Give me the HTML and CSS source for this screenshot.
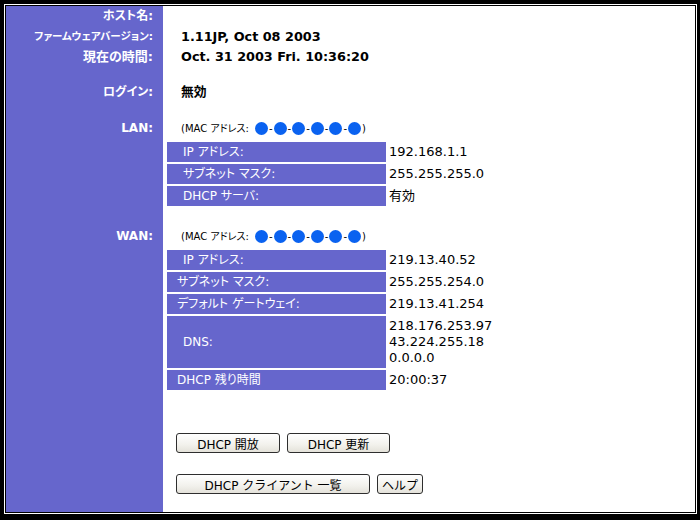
FILE: index.html
```html
<!DOCTYPE html>
<html>
  <head>
    <meta charset="utf-8">
    <title>ステータス</title>
    <link rel="stylesheet" href="styles.css">
  </head>
  <body>
    <div class="frame">
      <div class="page">

        <div class="row host">
          <div class="label">ホスト名:</div>
          <div class="value"></div>
        </div>
        <div class="row firmware">
          <div class="label small">ファームウェアバージョン:</div>
          <div class="value">1.11JP, Oct 08 2003</div>
        </div>
        <div class="row clock">
          <div class="label big">現在の時間:</div>
          <div class="value">Oct. 31 2003 Fri. 10:36:20</div>
        </div>
        <div class="row login">
          <div class="label">ログイン:</div>
          <div class="value">無効</div>
        </div>

        <div class="row lan">
          <div class="label latin">LAN:</div>
          <div class="block">
            <div class="mac">(MAC アドレス: <span class="dot"></span>-<span class="dot"></span>-<span class="dot"></span>-<span class="dot"></span>-<span class="dot"></span>-<span class="dot"></span>)</div>
            <div class="info">
              <div class="key indent">IP アドレス:</div><div class="val">192.168.1.1</div>
              <div class="key indent">サブネット マスク:</div><div class="val">255.255.255.0</div>
              <div class="key indent">DHCP サーバ:</div><div class="val">有効</div>
            </div>
          </div>
        </div>

        <div class="row wan">
          <div class="label latin">WAN:</div>
          <div class="block">
            <div class="mac">(MAC アドレス: <span class="dot"></span>-<span class="dot"></span>-<span class="dot"></span>-<span class="dot"></span>-<span class="dot"></span>-<span class="dot"></span>)</div>
            <div class="info">
              <div class="key indent">IP アドレス:</div><div class="val">219.13.40.52</div>
              <div class="key">サブネット マスク:</div><div class="val">255.255.254.0</div>
              <div class="key">デフォルト ゲートウェイ:</div><div class="val">219.13.41.254</div>
              <div class="key indent">DNS:</div><div class="val">218.176.253.97<br>43.224.255.18<br>0.0.0.0</div>
              <div class="key">DHCP 残り時間</div><div class="val">20:00:37</div>
            </div>
          </div>
        </div>

        <div class="row actions">
          <div class="label"></div>
          <div class="buttons">
            <div class="btn-line">
              <button class="btn release">DHCP 開放</button>
              <button class="btn renew">DHCP 更新</button>
            </div>
            <div class="btn-line">
              <button class="btn clients">DHCP クライアント 一覧</button>
              <button class="btn help">ヘルプ</button>
            </div>
          </div>
        </div>

      </div>
    </div>
  </body>
</html>
```

FILE: styles.css
```css
html, body {
  margin: 0;
  height: 520px;
  background: #000000;
  overflow: hidden;
}

body {
  font-family: "DejaVu Sans", "Noto Sans CJK JP", sans-serif;
  font-feature-settings: "palt";
}

.frame {
  margin: 4px 3px 4px 4px;
  border: 1px solid #ffffff;
  height: 510px;
  box-sizing: border-box;
}

/* purple side column runs the full height */
.page {
  border: 1px solid #000000;
  height: 100%;
  box-sizing: border-box;
  background: linear-gradient(to right, #6666cc 157px, #ffffff 157px);
  display: flex;
  flex-direction: column;
}

.row {
  display: grid;
  grid-template-columns: 157px 1fr;
}

.label {
  color: #ffffff;
  font-weight: bold;
  font-size: 12px;
  text-align: right;
  padding-right: 10px;
}

.label.small {
  font-size: 10.5px;
}

.label.big {
  font-size: 13px;
}

.label.latin {
  font-size: 12px;
}

.value {
  padding-left: 18px;
  font-size: 12.8px;
  font-weight: bold;
  color: #000000;
}

.host { line-height: 20px; }
.firmware { line-height: 21px; }
.clock { line-height: 19px; }
.login { line-height: 20px; margin-top: 16px; }
.lan { margin-top: 17px; }
.wan { margin-top: 21px; }

.lan .label, .wan .label {
  line-height: 18px;
}

.block {
  padding-left: 4px;
}

.mac {
  font-size: 10px;
  line-height: 19px;
  padding-left: 14px;
  display: flex;
  align-items: center;
  white-space: pre;
}

.dot {
  display: inline-block;
  width: 13px;
  height: 13px;
  border-radius: 50%;
  background: #0a62f0;
  margin: 0 1px;
}

.mac .dot:first-child {
  margin-left: 3px;
}

.info {
  display: grid;
  grid-template-columns: 219px auto;
  gap: 2px;
  margin-top: 4px;
}

.key {
  background: #6666cc;
  color: #ffffff;
  font-size: 12px;
  line-height: 16px;
  padding: 2px 0 2px 10px;
  display: flex;
  align-items: center;
}

.key.indent {
  padding-left: 16px;
}

.val {
  font-size: 13px;
  line-height: 16px;
  padding: 2px 0 2px 1px;
  color: #000000;
}

.actions {
  flex: 1;
  margin-top: 43px;
}

.buttons {
  padding-left: 13px;
}

.btn-line {
  display: flex;
  gap: 7px;
  margin-bottom: 21px;
}

.btn {
  height: 20px;
  padding: 0;
  font-family: "DejaVu Sans", "Noto Sans CJK JP", sans-serif;
  font-size: 12px;
  color: #000000;
  border: 1px solid #2e2e2e;
  border-radius: 3px;
  background: linear-gradient(#ffffff, #f2f1ec 60%, #e4e2da);
}

.release { width: 104px; }
.renew { width: 103px; }
.clients { width: 194px; }
.help { width: 46px; }
```
